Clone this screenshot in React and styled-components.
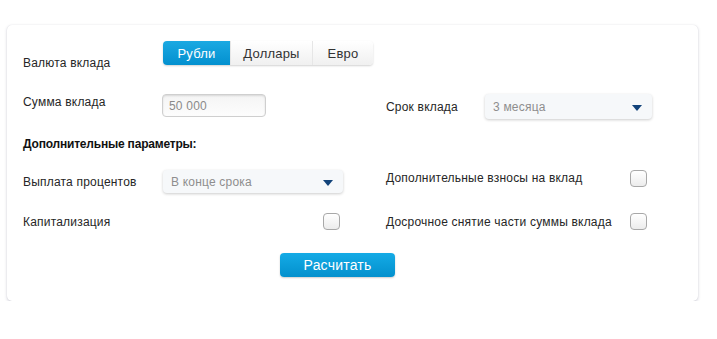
import React, { useState } from 'react'
import styled, { createGlobalStyle } from 'styled-components'

const GlobalStyle = createGlobalStyle`
  body {
    margin: 0;
    background: #fff;
    font-family: 'Liberation Sans', Arial, sans-serif;
  }
`

function App() {
  const [currency, setCurrency] = useState('rub')

  return (
    <>
      <GlobalStyle />
      <Card>
        <Form>
          <Row>
            <Half>
              <Label $top={15}>Валюта вклада</Label>
              <Segmented>
                <Segment $active={currency === 'rub'} $w={67} onClick={() => setCurrency('rub')}>Рубли</Segment>
                <Segment $active={currency === 'usd'} $w={82} onClick={() => setCurrency('usd')}>Доллары</Segment>
                <Segment $active={currency === 'eur'} $w={61} onClick={() => setCurrency('eur')}>Евро</Segment>
              </Segmented>
            </Half>
          </Row>

          <Row $mt={24}>
            <Half>
              <Label $top={1}>Сумма вклада</Label>
              <Input defaultValue="50 000" />
            </Half>
            <Half $right>
              <Label $top={6} $w={99}>Срок вклада</Label>
              <Select $w={167} $h={25}>
                3 месяца
                <Arrow />
              </Select>
            </Half>
          </Row>

          <Heading>Дополнительные параметры:</Heading>

          <Row $mt={19}>
            <Half>
              <Label $top={5}>Выплата процентов</Label>
              <Select $w={180} $h={23}>
                В конце срока
                <Arrow />
              </Select>
            </Half>
            <Half $right>
              <Label $top={1} $grow>Дополнительные взносы на вклад</Label>
              <Checkbox $mr={5} />
            </Half>
          </Row>

          <Row $mt={20}>
            <Half>
              <Label $top={2} $grow>Капитализация</Label>
              <Checkbox $mr={3} />
            </Half>
            <Half $right>
              <Label $top={2} $grow>Досрочное снятие части суммы вклада</Label>
              <Checkbox $mr={5} />
            </Half>
          </Row>

          <Actions>
            <Button>Расчитать</Button>
          </Actions>
        </Form>
      </Card>
    </>
  )
}

export default App

const Card = styled.div`
  box-sizing: border-box;
  width: 691px;
  margin: 25px 0 0 7px;
  padding: 16px 0 24px 16px;
  background: #fff;
  border-radius: 5px;
  box-shadow: 0 1px 3px rgba(60, 60, 100, 0.25), 0 0 1px rgba(0, 0, 0, 0.1);
`

const Form = styled.div`
  width: 629px;
  display: flex;
  flex-direction: column;
`

const Row = styled.div`
  display: flex;
  align-items: flex-start;
  margin-top: ${p => p.$mt || 0}px;
`

const Half = styled.div`
  display: flex;
  align-items: flex-start;
  width: ${p => (p.$right ? 266 : 320)}px;
  margin-left: ${p => (p.$right ? 43 : 0)}px;
`

const Label = styled.div`
  ${p => (p.$grow ? 'flex: 1;' : `width: ${p.$w || 140}px; flex: none;`)}
  padding-top: ${p => p.$top || 0}px;
  font-size: 12px;
  line-height: 14px;
  letter-spacing: 0.2px;
  color: #262626;
  white-space: nowrap;
`

const Segmented = styled.div`
  display: flex;
  height: 24px;
  border-radius: 4px;
  box-shadow: 0 1px 2px rgba(0, 0, 0, 0.18);
`

const Segment = styled.button`
  box-sizing: border-box;
  width: ${p => p.$w}px;
  height: 24px;
  padding: 0;
  border: none;
  border-left: 1px solid ${p => (p.$active ? 'transparent' : '#e6e6e6')};
  font-family: 'Liberation Sans', Arial, sans-serif;
  font-size: 13px;
  letter-spacing: 0.2px;
  color: ${p => (p.$active ? '#fff' : '#333')};
  background: ${p => (p.$active
    ? 'linear-gradient(#1ba9e2, #0390cf)'
    : 'linear-gradient(#ffffff, #f0f0f0)')};
  cursor: pointer;

  &:first-child {
    border-left: none;
    border-radius: 4px 0 0 4px;
  }
  &:last-child {
    border-radius: 0 4px 4px 0;
  }
`

const Input = styled.input`
  box-sizing: border-box;
  width: 104px;
  height: 23px;
  margin-left: -1px;
  padding: 0 6px;
  border: 1px solid #cfcfcf;
  border-radius: 4px;
  background: linear-gradient(#f4f4f4, #fdfdfd);
  box-shadow: inset 0 1px 2px rgba(0, 0, 0, 0.12);
  font-family: 'Liberation Sans', Arial, sans-serif;
  font-size: 12px;
  letter-spacing: 0.2px;
  color: #8a8a8a;
  outline: none;
`

const Select = styled.div`
  box-sizing: border-box;
  display: flex;
  align-items: center;
  justify-content: space-between;
  width: ${p => p.$w}px;
  height: ${p => p.$h}px;
  padding: 0 10px 0 8px;
  border-radius: 4px;
  background: #f6f8fa;
  box-shadow: 0 1px 3px rgba(0, 0, 0, 0.2);
  font-size: 12px;
  letter-spacing: 0.2px;
  color: #8e8e8e;
`

const Arrow = styled.span`
  width: 0;
  height: 0;
  margin-top: 2px;
  border-left: 5px solid transparent;
  border-right: 5px solid transparent;
  border-top: 6px solid #12437a;
`

const Checkbox = styled.span`
  box-sizing: border-box;
  flex: none;
  width: 17px;
  height: 17px;
  margin-right: ${p => p.$mr}px;
  border: 1px solid #a8a8a8;
  border-radius: 4px;
  background: linear-gradient(#ffffff, #ececec);
`

const Heading = styled.div`
  margin-top: 18px;
  font-size: 12px;
  line-height: 14px;
  font-weight: bold;
  letter-spacing: -0.2px;
  color: #111;
`

const Actions = styled.div`
  display: flex;
  justify-content: center;
  margin-top: 23px;
`

const Button = styled.button`
  width: 115px;
  height: 24px;
  padding: 0;
  border: none;
  border-radius: 4px;
  background: linear-gradient(#14abe6, #0390cd);
  box-shadow: 0 1px 2px rgba(0, 0, 0, 0.2);
  font-family: 'Liberation Sans', Arial, sans-serif;
  font-size: 14px;
  letter-spacing: 0.2px;
  color: #fff;
  cursor: pointer;
`
